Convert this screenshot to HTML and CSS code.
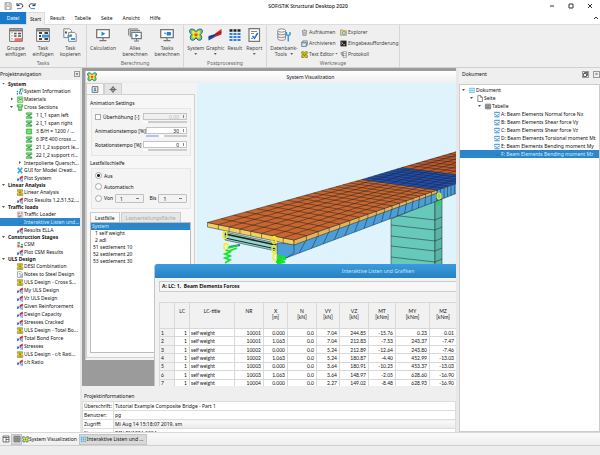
FILE: index.html
```
<!DOCTYPE html>
<html lang="de">
<head>
  <meta charset="UTF-8">
  <meta name="viewport" content="width=device-width, initial-scale=1.0">
  <title>SOFiSTiK Structural Desktop 2020</title>
  <link rel="stylesheet" href="styles.css">
</head>
<body>
  <!-- icon sprite -->
  <svg class="sprite" aria-hidden="true">
    <symbol id="i-save" viewBox="0 0 8 8"><path d="M1 .8h5.6l.6.6v6H1z" fill="#ddd" stroke="#888" stroke-width=".7"/><path d="M2.5 1h3v2h-3zM2.2 4.6h3.8v2.8H2.2z" fill="#fff" stroke="#888" stroke-width=".5"/></symbol>
    <symbol id="i-undo" viewBox="0 0 8 8"><path d="M1 1v2.6h2.6M1.2 3.4C2.4 1.3 6.6 1 6.8 3.8c0 1-.6 1.7-1.4 2.2" fill="none" stroke="#333" stroke-width="1"/><path d="M1 6.6h4" stroke="#2b8de0" stroke-width="1"/></symbol>
    <symbol id="i-group" viewBox="0 0 14 14"><path d="M.6.6h12.8v12.8H.6z" fill="#f6f6f6" stroke="#777" stroke-width="1"/><path d="M.6 2.4h12.8" stroke="#777" stroke-width="2"/><path d="M3 4v9" stroke="#999" stroke-dasharray="1.5 1.5"/><path d="M5 5.5h2.6M9 5.5h3M5 8h2.6M9 8h3" stroke="#555" stroke-width="1.6"/><path d="M5.5 10.2h7.5v3H5.5z" fill="#f07070"/></symbol>
    <symbol id="i-task" viewBox="0 0 14 14"><path d="M.6.6h12.8v12.8H.6z" fill="#f6f6f6" stroke="#777" stroke-width="1"/><path d="M.6 2.4h12.8" stroke="#777" stroke-width="2"/><path d="M3 5h3M3 8h2M3 11h3M8.5 11h3.5M8.5 5h3.5" stroke="#444" stroke-width="1.8"/><path d="M6 6.6h7v3H6z" fill="#3d9be0"/></symbol>
    <symbol id="i-copy" viewBox="0 0 14 14"><path d="M.8.8h6l1.6 1.6v7.2H.8z" fill="#fafafa" stroke="#888"/><path d="M5.6 4.4h6l1.6 1.6v7.4H5.6z" fill="#fafafa" stroke="#888"/><path d="M2 3.5h2v2H2zM6.8 6.6h2v2h-2z" fill="#555"/><path d="M4.5 7h4v2h-4zM8 10h4v2H8z" fill="#3d9be0"/></symbol>
    <symbol id="i-calc" viewBox="0 0 14 14"><path d="M.7 1.7h12.6v8H.7z" fill="#fff" stroke="#777" stroke-width="1.3"/><path d="M7 10v2.5M3.5 12.7h7" stroke="#777" stroke-width="1.2"/><path d="M5.5 3.5l3.8 2.3-3.8 2.3z" fill="#1e86dc"/></symbol>
    <symbol id="i-all" viewBox="0 0 14 14"><path d="M.7 7.5V1h9.5M2.3 9V2.6H12" fill="none" stroke="#777"/><path d="M3.8 4.4h9.5v6.3H3.8z" fill="#fff" stroke="#777" stroke-width="1.2"/><path d="M8.5 11v1.8M6 13h5" stroke="#777"/><path d="M7.3 5.6l3.3 1.9-3.3 2z" fill="#1e86dc"/></symbol>
    <symbol id="i-tcalc" viewBox="0 0 14 14"><path d="M.7 1.7h12.6v8H.7z" fill="#fff" stroke="#777" stroke-width="1.3"/><path d="M7 10v2.5M3.5 12.7h7" stroke="#777" stroke-width="1.2"/><path d="M4 5.2h2M7 4.5h3.5V7H7z" fill="#1e86dc" stroke="#1e86dc"/></symbol>
    <symbol id="i-fly" viewBox="0 0 14 14"><path d="M7 3.5C5 .6 1.5.5.8 2c-.6 1.5.2 3.5 1.7 4.6C1 8 .8 11 2.3 12c1.6.9 3.6-.2 4.7-2.2 1.1 2 3.1 3.1 4.7 2.2 1.5-1 1.3-4-.2-5.4 1.5-1.1 2.3-3.1 1.7-4.6C12.500.5 9 .6 7 3.5z" fill="#6fd05a" stroke="#284a9e" stroke-width=".9"/><path d="M7 5C5.5 3 3.3 2.7 2.8 3.5c-.3 1.3.6 2.2 1.7 3C3.2 7.8 3 9.5 3.8 10.2 5 10.6 6.2 9.4 7 8c.8 1.4 2 2.6 3.2 2.2.8-.7.6-2.4-.7-3.7 1.1-.8 2-1.7 1.7-3C10.7 2.7 8.5 3 7 5z" fill="#ffe32e"/><path d="M5.5 5.5h3v2.6h-3z" fill="#e2502a"/></symbol>
    <symbol id="i-graphic" viewBox="0 0 14 14"><path d="M.5 12.5V8L7 6v3z" fill="#2348a8"/><path d="M7 9V5.5L13.5 1v5.5z" fill="#d8232a"/><path d="M.5 9.8L13.5 4" stroke="#333" stroke-width=".8"/></symbol>
    <symbol id="i-result" viewBox="0 0 14 14"><path d="M1.5 2.5h11" stroke="#222" stroke-width="2.4" stroke-dasharray="3 1"/><path d="M1.5 6h11M1.5 9h11M1.5 12h11" stroke="#2f7fe0" stroke-width="1.9" stroke-dasharray="3 1"/></symbol>
    <symbol id="i-report" viewBox="0 0 14 14"><path d="M2 .7h10.5v12.6H2z" fill="#fff" stroke="#777" stroke-width="1.2"/><path d="M4 3.5h6M4 5.5h3M4 10.5h2" stroke="#888"/><path d="M5.5 8l2 2.3L10.7 5" fill="none" stroke="#1e70d0" stroke-width="1.5"/></symbol>
    <symbol id="i-db" viewBox="0 0 14 14"><path d="M.8 2.5v8.3c0 2 7.7 2 7.7 0V2.5" fill="#f4f4f4" stroke="#888"/><ellipse cx="4.650" cy="2.5" rx="3.850" ry="1.6" fill="#fff" stroke="#888"/><path d="M.8 5.3c0 2 7.7 2 7.7 0M.8 8c0 2 7.7 2 7.7 0" fill="none" stroke="#888"/><path d="M9.5 4v2.5c0 1 3.5 1 3.5 0V4M11.3 7v6.5" fill="none" stroke="#3d9be0" stroke-width="1.5"/></symbol>
    <symbol id="i-trash" viewBox="0 0 8 8"><path d="M1 2h6M3 1h2M1.8 2.3l.4 5h3.6l.4-5M3.3 3.3v3M4.7 3.3v3" fill="none" stroke="#777" stroke-width=".8"/></symbol>
    <symbol id="i-archive" viewBox="0 0 8 8"><path d="M2 1h5.3v5H2z" fill="#fff" stroke="#666" stroke-width=".8"/><path d="M.8 2.5h5.3v4.8H.8z" fill="#d8ecfb" stroke="#555" stroke-width=".8"/><path d="M1 3.4h5" stroke="#3d9be0"/></symbol>
    <symbol id="i-teddy" viewBox="0 0 8 8"><path d="M.8.8h2l1.2.8L5.2.8h2v2l-.8 1.4.9 1v2.2H5L4 6.7l-1 .7H.8V5.2l.8-1-.8-1.4z" fill="#d8c514" stroke="#55500a" stroke-width=".6"/><path d="M2.5 3h1v1h-1zM4.6 3h1v1h-1zM3 5h2v.8H3z" fill="#333"/></symbol>
    <symbol id="i-folder" viewBox="0 0 8 8"><path d="M.6 1h2.7l.6.9h3.4v5.3H.6z" fill="#f0d070" stroke="#8a7a40" stroke-width=".6"/><circle cx="4.5" cy="4.6" r="1.8" fill="#bfe3fa" stroke="#3d86c0" stroke-width=".7"/></symbol>
    <symbol id="i-cmd" viewBox="0 0 8 8"><path d="M.5.7h7v6.6h-7z" fill="#222"/><path d="M1.5 2.3l1.6 1.3-1.6 1.3M3.8 5.5h2" fill="none" stroke="#fff" stroke-width=".8"/></symbol>
    <symbol id="i-log" viewBox="0 0 8 8"><path d="M3.5.8h3.8v6.4H3.5z" fill="#fff" stroke="#777" stroke-width=".7"/><path d="M.6 2h3.3M1 3.5h3M2 5h2.5M5 3h1.5M5 5h1.5" stroke="#555" stroke-width=".8"/></symbol>
    <symbol id="t-info" viewBox="0 0 8 8"><path d="M4.5 1h2.7v3.5" fill="none" stroke="#5fc05a" stroke-width="1.2"/><path d="M1 3v1.5M1 5.5v2M3.5 1.5C5 1 5 3 3.7 4.5V7.2" fill="none" stroke="#1e78d0" stroke-width="1.3"/><path d="M5.6 5.5v2" stroke="#1e78d0" stroke-width="1.2"/></symbol>
    <symbol id="t-mat" viewBox="0 0 8 8"><path d="M1 1h6.3v6.3H1z" fill="#b7e8ad" stroke="#4cb84a" stroke-width=".8"/><path d="M2 5.5l2-2 1 1 1.5-2M2 2.5h2" fill="none" stroke="#27862c" stroke-width=".8"/></symbol>
    <symbol id="t-cross" viewBox="0 0 8 8"><path d="M.8.8h6.4v2.4H6v4.2H2.2V3.2H.8z" fill="#62ca5a" stroke="#2f9436" stroke-width=".6"/><path d="M2.8 2h3M3.3 5h1.6" stroke="#e8ffe5" stroke-width=".8"/></symbol>
    <symbol id="t-sec" viewBox="0 0 8 8"><path d="M.8.8h6.5v2H5.2v2.7h2.1v1.8H.8V5.5h2V2.8h-2z" fill="#7fd873" stroke="#36a53c" stroke-width=".6"/><path d="M1.8 5.5l2-2.2 1 .8 1.6-2M5 6.3h2" fill="none" stroke="#1e7090" stroke-width=".8"/></symbol>
    <symbol id="t-rect" viewBox="0 0 8 8"><path d="M1 1.2h6v5.6H1z" fill="#67d35c" stroke="#36a53c" stroke-width=".8"/><path d="M2 3h4M2 4.8h4" stroke="#b6f0ae" stroke-width=".6"/></symbol>
    <symbol id="t-gui" viewBox="0 0 8 8"><path d="M1.5.8L6.5 7.2M6.5.8L1.5 7.2" stroke="#27a5e4" stroke-width="1.7"/></symbol>
    <symbol id="t-plot" viewBox="0 0 8 8"><path d="M.8 7.2V3.9L3.2 4v1.6z" fill="#245fc4"/><path d="M3.6 4.6V2.7L7.2.7v3z" fill="#d3242e"/><path d="M4 5.2h1.2v2.2M6 4.7h1.3M6 6h1.3M6 7.2h1.3" fill="none" stroke="#2b6fc4" stroke-width=".9"/></symbol>
    <symbol id="t-bear" viewBox="0 0 8 8"><path d="M1 .8h6v1.8l-1 1 1.2 1.2v2.5H1V5l1-1.4-1-1z" fill="#e8d62c" stroke="#6a6518" stroke-width=".6"/><path d="M2.5 2.4h3M3 4h2M2.5 5.9h3.5" stroke="#333" stroke-width=".6"/></symbol>
    <symbol id="t-load" viewBox="0 0 8 8"><path d="M1 1h6.2v6.2H1z" fill="#f1f1f1" stroke="#999" stroke-width=".6"/><path d="M1.7 2.5h2M5 2.5h1.5" stroke="#d3303a"/><path d="M2 4.8h1.5M5 4.2v2.5M2 6.5h2" stroke="#444" stroke-width=".9"/></symbol>
    <symbol id="t-list" viewBox="0 0 8 8"><path d="M2 6.5l2-2 1 1 2-2.5" fill="none" stroke="#1f6fb0" stroke-width=".8"/></symbol>
    <symbol id="t-csm" viewBox="0 0 8 8"><path d="M1 1h3v2H1zM5 3h2.3v2H5z" fill="#4cb84a"/><path d="M1 4h2.5v3.3H1z" fill="#e05050"/><path d="M4.5 6h2.8v1.5H4.5z" fill="#333"/></symbol>
    <symbol id="t-note" viewBox="0 0 8 8"><path d="M1.2.8h3.8l1.8 1.7v4.8H1.2z" fill="#fff" stroke="#777" stroke-width=".7"/><path d="M2.5 3h2M3.5 4.5h3M3.5 6h3" stroke="#4a88b8" stroke-width=".8"/></symbol>
    <symbol id="d-page" viewBox="0 0 8 8"><path d="M1.5.7h3.3l2 2v4.7H1.5z" fill="#fff" stroke="#444" stroke-width=".7"/><path d="M4.7.7v2.1h2" fill="none" stroke="#444" stroke-width=".6"/></symbol>
    <symbol id="d-doc" viewBox="0 0 8 8"><path d="M1.7.8v6.4M4 .8v6.4M6.3.8v6.4" stroke="#58b4ec" stroke-width="1.6" stroke-dasharray="1.7 .5"/></symbol>
    <symbol id="d-tab" viewBox="0 0 8 8"><path d="M1 1.3h6v5.5H1zM1 3.2h6M1 5h6M3 1.3v5.5M5 1.3v5.5" fill="#ddd" stroke="#555" stroke-width=".7"/></symbol>
    <symbol id="d-bend" viewBox="0 0 8 8"><path d="M1 1h6v6H1z" fill="#f2f8fd" stroke="#aac4da" stroke-width=".6"/><path d="M1 1.7h6M1 3.2l2 1.6h2l2-1.6M1.5 6.5h5" fill="none" stroke="#2e86d4" stroke-width=".9"/></symbol>
    <symbol id="i-win" viewBox="0 0 8 8"><path d="M1 1h6v6H1zM1 2.5h6M4 2.5v4.5M4 4.5h3" fill="#fff" stroke="#555" stroke-width=".8"/></symbol>
  </svg>

  <header class="titlebar">
    <div class="quick">
      <button aria-label="Speichern"><svg><use href="#i-save"/></svg></button>
      <button aria-label="Rückgängig"><svg><use href="#i-undo"/></svg></button>
      <button aria-label="Wiederholen" class="redo"><svg><use href="#i-undo"/></svg></button>
    </div>
    <h1>SOFiSTiK Structural Desktop 2020</h1>
    <div class="winbtns">
      <button aria-label="Minimieren"><svg viewBox="0 0 6 6"><path d="M1 3h4"/></svg></button>
      <button aria-label="Maximieren"><svg viewBox="0 0 6 6"><path d="M1 1h4v4H1z"/></svg></button>
      <button aria-label="Schließen"><svg viewBox="0 0 6 6"><path d="M1 1l4 4M5 1L1 5"/></svg></button>
    </div>
  </header>

  <nav class="tabs">
    <button class="datei">Datei</button>
    <button class="active">Start</button>
    <button>Result</button>
    <button>Tabelle</button>
    <button>Seite</button>
    <button>Ansicht</button>
    <button>Hilfe</button>
    <button class="collapse" aria-label="Menüband einklappen"><svg viewBox="0 0 6 6"><path d="M1 4l2-2 2 2"/></svg></button>
  </nav>

  <section class="ribbon">
    <div class="group g-tasks">
      <div class="tools">
        <button><svg><use href="#i-group"/></svg>Gruppe<br>einfügen</button>
        <button><svg><use href="#i-task"/></svg>Task<br>einfügen</button>
        <button><svg><use href="#i-copy"/></svg>Task<br>kopieren</button>
      </div>
      <div class="caption">Tasks</div>
    </div>
    <div class="group g-calc">
      <div class="tools">
        <button><svg><use href="#i-calc"/></svg>Calculation</button>
        <button><svg><use href="#i-all"/></svg>Alles<br>berechnen</button>
        <button><svg><use href="#i-tcalc"/></svg>Tasks<br>berechnen</button>
      </div>
      <div class="caption">Berechnung</div>
    </div>
    <div class="group g-post">
      <div class="tools">
        <button><svg><use href="#i-fly"/></svg>System<i class="arrow"></i></button>
        <button><svg><use href="#i-graphic"/></svg>Graphic<i class="arrow"></i></button>
        <button><svg><use href="#i-result"/></svg>Result</button>
        <button><svg><use href="#i-report"/></svg>Report<i class="arrow"></i></button>
      </div>
      <div class="caption">Postprocessing</div>
    </div>
    <div class="group g-tools">
      <div class="tools">
        <button class="db"><svg><use href="#i-db"/></svg>Datenbank-<br>Tools <i class="arrow inline"></i></button>
        <div class="list">
          <button><svg><use href="#i-trash"/></svg>Aufräumen</button>
          <button><svg><use href="#i-archive"/></svg>Archivieren</button>
          <button><svg><use href="#i-teddy"/></svg>Text Editor <i class="arrow inline"></i></button>
        </div>
        <div class="list">
          <button><svg><use href="#i-folder"/></svg>Explorer</button>
          <button><svg><use href="#i-cmd"/></svg>Eingabeaufforderung</button>
          <button><svg><use href="#i-log"/></svg>Protokoll</button>
        </div>
      </div>
      <div class="caption">Werkzeuge</div>
    </div>
  </section>

  <main>
    <aside class="navi">
      <div class="dockhead">Projektnavigation <button aria-label="Projektnavigation schließen">×</button></div>
      <ul class="tree">
        <li class="head open">System</li>
        <li><svg><use href="#t-info"/></svg>System Information</li>
        <li class="closed"><svg><use href="#t-mat"/></svg>Materials</li>
        <li class="open"><svg><use href="#t-cross"/></svg>Cross Sections</li>
        <li class="sub"><svg><use href="#t-sec"/></svg>1 I_1 span left</li>
        <li class="sub"><svg><use href="#t-sec"/></svg>2 I_1 span right</li>
        <li class="sub"><svg><use href="#t-rect"/></svg>3 B/H = 1200 / ...</li>
        <li class="sub"><svg><use href="#t-sec"/></svg>6 IPE 400 cross ...</li>
        <li class="sub"><svg><use href="#t-sec"/></svg>21 I_2 support le...</li>
        <li class="sub"><svg><use href="#t-sec"/></svg>22 I_2 support ri...</li>
        <li class="inter closed">Interpolierte Quersch...</li>
        <li><svg><use href="#t-gui"/></svg>GUI for Model Creati...</li>
        <li><svg><use href="#t-plot"/></svg>Plot System</li>
        <li class="head open">Linear Analysis</li>
        <li><svg><use href="#t-bear"/></svg>Linear Analysis</li>
        <li><svg><use href="#t-plot"/></svg>Plot Results 1,2,51,52,...</li>
        <li class="head open">Traffic loads</li>
        <li><svg><use href="#t-load"/></svg>Traffic Loader</li>
        <li class="selected"><svg><use href="#t-list"/></svg>Interaktive Listen und...</li>
        <li><svg><use href="#t-plot"/></svg>Results ELLA</li>
        <li class="head open">Construction Stages</li>
        <li><svg><use href="#t-csm"/></svg>CSM</li>
        <li><svg><use href="#t-plot"/></svg>Plot CSM Results</li>
        <li class="head open">ULS Design</li>
        <li><svg><use href="#t-bear"/></svg>DESI Combination</li>
        <li><svg><use href="#t-note"/></svg>Notes to Steel Design</li>
        <li><svg><use href="#t-bear"/></svg>ULS Design - Cross S...</li>
        <li><svg><use href="#t-plot"/></svg>My ULS Design</li>
        <li><svg><use href="#t-plot"/></svg>Vz ULS Design</li>
        <li><svg><use href="#t-plot"/></svg>Given Reinforcement</li>
        <li><svg><use href="#t-plot"/></svg>Design Capacity</li>
        <li><svg><use href="#t-plot"/></svg>Stresses Cracked</li>
        <li><svg><use href="#t-bear"/></svg>ULS Design - Total Bo...</li>
        <li><svg><use href="#t-plot"/></svg>Total Bond Force</li>
        <li><svg><use href="#t-plot"/></svg>Stresses</li>
        <li><svg><use href="#t-bear"/></svg>ULS Design - c/t Rati...</li>
        <li><svg><use href="#t-plot"/></svg>c/t Ratio</li>
      </ul>
    </aside>

    <div class="center">
      <div class="mdi">
        <section class="viswin">
          <div class="vistitle"><svg><use href="#i-fly"/></svg><span>System Visualization</span></div>
          <div class="visbody">
            <form class="controls">
              <div class="ctabs">
                <button type="button" class="on" aria-label="Animation"><svg viewBox="0 0 8 8"><path d="M.7.7h6.6v6.6H.7z" fill="#dceefa" stroke="#555" stroke-width=".9"/><path d="M2.5 5.8C2.5 3 5.5 3 5.5 5.8z" fill="#3d86c0"/><circle cx="4" cy="2.7" r="1" fill="#3d86c0"/></svg></button>
                <button type="button" aria-label="Ansicht"><svg viewBox="0 0 8 8"><circle cx="4" cy="4" r="2.3" fill="none" stroke="#555" stroke-width=".9"/><path d="M4 0v8M0 4h8" stroke="#555" stroke-width=".9"/></svg></button>
              </div>
              <div class="cpage">
                <fieldset>
                  <legend>Animation Settings</legend>
                  <div class="box">
                    <div class="row">
                      <label><input type="checkbox"> Überhöhung [-]</label>
                      <div class="spin off"><input type="text" value="0.00" aria-label="Überhöhung" disabled><div class="slide"><b></b></div></div>
                    </div>
                    <div class="row">
                      <label for="tempo">Animationstempo [%]</label>
                      <div class="spin"><input type="text" id="tempo" value="30"><div class="slide mid"><b></b></div></div>
                    </div>
                    <div class="row">
                      <label for="rot">Rotationstempo [%]</label>
                      <div class="spin"><input type="text" id="rot" value="0"><div class="slide"><b></b></div></div>
                    </div>
                  </div>
                </fieldset>
                <fieldset>
                  <legend>Lastfallschleife</legend>
                  <div class="box loop">
                    <label><input type="radio" name="loop" checked> Aus</label>
                    <label><input type="radio" name="loop"> Automatisch</label>
                    <div class="range">
                      <label><input type="radio" name="loop"> Von</label>
                      <select aria-label="Von"><option>1</option></select>
                      <label class="bis" for="bis">Bis</label>
                      <select id="bis"><option>1</option></select>
                    </div>
                  </div>
                </fieldset>
                <div class="ltabs">
                  <button type="button" class="on">Lastfälle</button>
                  <button type="button" disabled>Lastverteilungsfläche</button>
                </div>
                <ul class="cases">
                  <li class="selected">System</li>
                  <li class="one">1 self weight</li>
                  <li class="one">2 adl</li>
                  <li>51 settlement 10</li>
                  <li>52 settlement 20</li>
                  <li>53 settlement 30</li>
                </ul>
              </div>
            </form>
            <svg class="view" id="view" viewBox="197 83 259 277" preserveAspectRatio="xMinYMin slice" role="img" aria-label="Brückenmodell"></svg>
          </div>
        </section>

        <section class="tablewin">
          <div class="tabletitle"><span>Interaktive Listen und Grafiken</span></div>
          <div class="tablehead">A: LC: 1,&nbsp; Beam Elements Forces</div>
          <table>
            <colgroup><col class="w15"><col class="w15"><col class="w45"><col class="w29"><col class="w24"><col class="w29"><col class="w23"><col class="w29"><col class="w27"><col class="w34"><col></colgroup>
            <thead>
              <tr><th></th><th class="r">LC</th><th>LC-title</th><th>NR</th><th>X<br>[m]</th><th>N<br>[kN]</th><th>VY<br>[kN]</th><th>VZ<br>[kN]</th><th>MT<br>[kNm]</th><th>MY<br>[kNm]</th><th>MZ<br>[kNm]</th></tr>
            </thead>
            <tbody>
              <tr><th>1</th><td>1</td><td class="l">self weight</td><td>10001</td><td>0.000</td><td>0.0</td><td>7.04</td><td>244.85</td><td>-15.76</td><td>0.23</td><td>0.01</td></tr>
              <tr><th>2</th><td>1</td><td class="l">self weight</td><td>10001</td><td>1.063</td><td>0.0</td><td>7.04</td><td>212.83</td><td>-7.53</td><td>243.37</td><td>-7.47</td></tr>
              <tr><th>3</th><td>1</td><td class="l">self weight</td><td>10002</td><td>0.000</td><td>0.0</td><td>5.24</td><td>212.89</td><td>-12.64</td><td>243.80</td><td>-7.46</td></tr>
              <tr><th>4</th><td>1</td><td class="l">self weight</td><td>10002</td><td>1.063</td><td>0.0</td><td>5.24</td><td>180.87</td><td>-4.40</td><td>452.99</td><td>-13.03</td></tr>
              <tr><th>5</th><td>1</td><td class="l">self weight</td><td>10003</td><td>0.000</td><td>0.0</td><td>3.64</td><td>180.91</td><td>-10.25</td><td>453.37</td><td>-13.03</td></tr>
              <tr><th>6</th><td>1</td><td class="l">self weight</td><td>10003</td><td>1.063</td><td>0.0</td><td>3.64</td><td>148.97</td><td>-2.05</td><td>628.60</td><td>-16.90</td></tr>
              <tr><th>7</th><td>1</td><td class="l">self weight</td><td>10004</td><td>0.000</td><td>0.0</td><td>2.27</td><td>149.02</td><td>-8.48</td><td>628.93</td><td>-16.90</td></tr>
            </tbody>
          </table>
        </section>
      </div>

      <section class="info">
        <h2>Projektinformationen</h2>
        <table>
          <tr><th>Überschrift:</th><td>Tutorial Example Composite Bridge - Part 1</td></tr>
          <tr><th>Benutzer:</th><td>pg</td></tr>
          <tr><th>Zugriff:</th><td class="combo">Mi Aug 14 15:18:07 2019, sm</td></tr>
          <tr><th>Norm:</th><td>DIN EN1994-2004</td></tr>
        </table>
      </section>
    </div>

    <aside class="dokument">
      <div class="dockhead">Dokument <span><button aria-label="Lösen"><svg viewBox="0 0 5 5"><path d="M.5 1.5h3v3h-3zM1.5 1.5v-1h3v3h-1" fill="none" stroke="#444" stroke-width=".8"/></svg></button><button aria-label="Dokument schließen">×</button></span></div>
      <ul class="tree">
        <li class="open d0"><svg><use href="#d-doc"/></svg>Dokument</li>
        <li class="open d1"><svg><use href="#d-page"/></svg>Seite</li>
        <li class="open d2"><svg><use href="#d-tab"/></svg>Tabelle</li>
        <li class="d3"><svg><use href="#d-bend"/></svg>A: Beam Elements Normal force Nx</li>
        <li class="d3"><svg><use href="#d-bend"/></svg>B: Beam Elements Shear force Vy</li>
        <li class="d3"><svg><use href="#d-bend"/></svg>C: Beam Elements Shear force Vz</li>
        <li class="d3"><svg><use href="#d-bend"/></svg>D: Beam Elements Torsional moment Mt</li>
        <li class="d3"><svg><use href="#d-bend"/></svg>E: Beam Elements Bending moment My</li>
        <li class="d3 selected"><svg><use href="#t-list"/></svg>F: Beam Elements Bending moment Mz</li>
      </ul>
    </aside>
  </main>

  <footer class="taskbar">
    <button class="ico" aria-label="Fenster"><svg><use href="#i-win"/></svg></button>
    <button class="ico on" aria-label="Kacheln"><svg><use href="#d-tab"/></svg></button>
    <button class="task"><svg><use href="#i-fly"/></svg>System Visualization</button>
    <button class="task on"><svg><use href="#d-doc"/></svg>Interaktive Listen und ...</button>
  </footer>

  <script src="bridge.js"></script>
</body>
</html>
```
FILE: styles.css
```
:root {
  --blau: #2b87cb;
  --grau: #efefef;
  --text: #111;
}

* {
  box-sizing: border-box;
}

body {
  margin: 0;
  height: 100vh;
  display: flex;
  flex-direction: column;
  overflow: hidden;
  background: #ededed;
  color: var(--text);
  font: 5px/8px "Noto Sans", "Open Sans", sans-serif;
}

button, input, select {
  font: inherit;
  color: inherit;
  margin: 0;
  padding: 0;
  border: 0;
  background: none;
}

ul {
  list-style: none;
  margin: 0;
  padding: 0;
}

svg {
  display: block;
  width: 8px;
  height: 8px;
  flex: none;
}

.sprite {
  position: absolute;
  width: 0;
  height: 0;
}

/* title bar */
.titlebar {
  display: grid;
  grid-template-columns: 1fr auto 1fr;
  align-items: center;
  height: 12px;
  flex: none;
  background: #fff;
}

.titlebar h1 {
  margin: 0;
  padding-left: 16px;
  font-size: 5px;
  font-weight: 500;
}

.quick {
  display: flex;
  gap: 4px;
  padding-left: 4px;
}

.redo svg {
  transform: scaleX(-1);
}

.winbtns {
  display: flex;
  justify-content: flex-end;
  gap: 13px;
  padding-right: 7px;
}

.winbtns svg,
.collapse svg {
  width: 6px;
  height: 6px;
  fill: none;
  stroke: #333;
  stroke-width: 1;
}

/* ribbon tabs */
.tabs {
  display: flex;
  height: 13px;
  flex: none;
  background: #fff;
  border-bottom: 1px solid #dcdcdc;
}

.tabs button {
  padding: 0 5px;
}

.tabs .datei {
  width: 26px;
  padding: 0;
  background: #1979ca;
  color: #fff;
}

.tabs .active {
  width: 19px;
  margin-bottom: -1px;
  padding: 0;
  background: var(--grau);
  border: 1px solid #dcdcdc;
  border-bottom: 0;
}

.tabs .collapse {
  margin-left: auto;
  padding: 0 1px;
}

/* ribbon */
.ribbon {
  display: flex;
  height: 43px;
  flex: none;
  background: var(--grau);
  border-bottom: 1px solid #d0d0d0;
  color: #444;
}

.group {
  display: flex;
  flex-direction: column;
  border-right: 1px solid #d6d6d6;
}

.tools {
  display: flex;
  flex: 1;
}

.tools > button {
  flex: 1;
  display: block;
  padding-top: 3px;
  line-height: 6px;
  align-self: flex-start;
  text-align: center;
}

.tools > button svg {
  width: 14px;
  height: 14px;
  margin: 0 auto 3px;
}

.caption {
  height: 8px;
  text-align: center;
  color: #666;
}

.g-tasks { width: 87px; padding: 0 2px; }
.g-calc { width: 97px; }
.g-post { width: 83px; padding: 0 2px; }
.g-tools { width: 133px; }

.tools > .db {
  flex: none;
  width: 34px;
}

.arrow {
  display: block;
  width: 3px;
  height: 2px;
  margin: 2px auto 0;
  background: #666;
  clip-path: polygon(0 0, 100% 0, 50% 100%);
}

.arrow.inline {
  display: inline-block;
  margin: 0 0 1px 2px;
}

.list .arrow.inline {
  margin-left: 0;
}

.list {
  display: flex;
  flex-direction: column;
  gap: 3px;
  padding-top: 3px;
  width: 39px;
}

.list button {
  display: flex;
  align-items: center;
  gap: 1px;
  height: 8px;
  white-space: nowrap;
}

.list svg {
  width: 7px;
  height: 7px;
}

/* main area */
main {
  flex: 1;
  min-height: 0;
  display: flex;
}

.navi {
  width: 82px;
  flex: none;
  display: flex;
  flex-direction: column;
  padding-right: 2px;
  background: #e8e8e8;
}

.dockhead {
  display: flex;
  justify-content: space-between;
  align-items: center;
  height: 12px;
  flex: none;
  background: var(--grau);
}

.dockhead button {
  width: 6px;
  height: 6px;
  border: 1px solid #999;
  line-height: 4px;
}

.tree {
  flex: 1;
  min-height: 0;
  overflow: hidden;
  background: #fff;
}

.tree li {
  display: flex;
  align-items: center;
  height: 8px;
  padding-left: 16px;
  white-space: nowrap;
}

.tree svg {
  height: 7px;
}

.tree .head {
  height: 6px;
  padding-left: 2px;
  font-weight: bold;
}

.tree .head:first-child { height: 7px; }

.tree .sub { padding-left: 25px; gap: 3px; }
.tree .inter { height: 7px; }

.tree .selected {
  background: var(--blau);
  color: #d5ebfb;
}

.open::before,
.closed::before {
  content: "";
  width: 3px;
  height: 2px;
  margin-right: 3px;
  background: #555;
  clip-path: polygon(0 0, 100% 0, 50% 100%);
}

.closed::before {
  width: 2px;
  height: 3px;
  clip-path: polygon(0 0, 100% 50%, 0 100%);
}

.navi .open:not(.head) { padding-left: 10px; }
.navi .closed { padding-left: 11px; }
.navi .inter.closed { padding-left: 19px; }

.center {
  flex: 1;
  min-width: 0;
  display: flex;
  flex-direction: column;
}

.mdi {
  position: relative;
  flex: 1;
  min-height: 0;
  overflow: hidden;
  padding: 3px 0 26px 3px;
  background: #9b9b9b;
}

/* system visualization window */
.viswin {
  height: 100%;
  display: flex;
  flex-direction: column;
  background: #f3f3f3;
  border-left: 1px solid #ccc;
}

.vistitle {
  display: flex;
  align-items: center;
  height: 12px;
  flex: none;
  padding-left: 1px;
  background: linear-gradient(#fff, #eee);
}

.vistitle svg {
  width: 10px;
  height: 10px;
}

.vistitle span {
  flex: 1;
  text-align: center;
  padding-left: 68px;
}

.visbody {
  flex: 1;
  min-height: 0;
  display: flex;
}

.controls {
  width: 111px;
  flex: none;
  display: flex;
  flex-direction: column;
}

.ctabs {
  display: flex;
  margin-bottom: -1px;
}

.ctabs button {
  width: 18px;
  height: 12px;
  border: 1px solid #d0d0d0;
  background: #e4e4e4;
}

.ctabs svg {
  height: 7px;
  margin: auto;
}

.ctabs .on {
  background: #f7f7f7;
  border-bottom-color: #f7f7f7;
}

.cpage {
  flex: 1;
  min-height: 0;
  display: flex;
  flex-direction: column;
  margin: 0 2px 2px 0;
  padding: 4px 3px;
  background: #f7f7f7;
  border: 1px solid #d0d0d0;
}

fieldset {
  margin: 0;
  padding: 0;
  border: 0;
  min-width: 0;
}

legend {
  padding: 0;
}

.box {
  margin: 1px 0 3px 1px;
  padding: 4px 3px 0;
  background: #f4f4f4;
  border: 1px solid #e6e6e6;
}

.row {
  display: flex;
  align-items: flex-start;
  justify-content: space-between;
  height: 14px;
}

.row label {
  white-space: nowrap;
}

label {
  display: flex;
  align-items: center;
  gap: 2px;
}

input[type=checkbox] {
  appearance: none;
  width: 6px;
  height: 6px;
  border: 1px solid #aaa;
  background: #fff;
}

input[type=radio] {
  appearance: none;
  width: 7px;
  height: 7px;
  border: 1px solid #aaa;
  border-radius: 50%;
  background: #fff;
}

input[type=radio]:checked {
  background: radial-gradient(#222 0 1px, #fff 2px);
}

.spin {
  width: 44px;
}

.spin input {
  display: block;
  width: 100%;
  height: 7px;
  padding-right: 7px;
  text-align: right;
  background: linear-gradient(#888, #888) right 2px center / 1px 3px no-repeat #fff;
  border: 1px solid #c4c4c4;
  line-height: 5px;
}

.spin.off input {
  background-color: #f0f0f0;
  color: #bbb;
}

.slide {
  height: 2px;
  margin-top: 1px;
  background: #ccc;
}

.slide b {
  display: block;
  width: 5px;
  height: 2px;
  background: #fff;
}

.slide.mid {
  background: linear-gradient(to right, #b9bff0 30%, #ccc 30%);
}

.slide.mid b {
  margin-left: 13px;
}

.loop {
  padding: 1px 3px 4px;
}

.loop > label {
  height: 11px;
}

.range {
  display: flex;
  align-items: center;
  height: 12px;
}

.range .bis {
  margin: 0 2px 0 6px;
}

select {
  appearance: none;
  width: 29px;
  height: 9px;
  padding-left: 4px;
  border: 1px solid #c0c0c0;
  border-radius: 1px;
  background: linear-gradient(#777, #777) right 4px center / 3px 1px no-repeat #f2f2f2;
}

.range select:first-of-type {
  margin-left: 2px;
}

.ltabs {
  display: flex;
  gap: 1px;
}

.ltabs button {
  height: 10px;
  padding: 0 4px;
  border: 1px solid #ccc;
  border-bottom: 0;
  background: #e6e6e6;
  color: #aaa;
}

.ltabs .on {
  background: #fafafa;
  color: #222;
}

.cases {
  flex: 1;
  min-height: 0;
  background: #fff;
  border: 1px solid #bbb;
  line-height: 7px;
}

.cases li {
  height: 7px;
  padding-left: 2px;
}

.cases .one {
  padding-left: 4px;
}

.cases .selected {
  padding-left: 1px;
  background: var(--blau);
  color: #cfe8fa;
}

.view {
  flex: 1;
  min-width: 0;
  width: auto;
  height: 100%;
  background: #dff3fd;
}

/* floating list window */
.tablewin {
  position: absolute;
  left: 72px;
  right: 0;
  top: 196px;
  bottom: 0;
  overflow: hidden;
  background: #f2f2f2;
  border-left: 1px solid #c4c4c4;
  border-radius: 3px 0 0 0;
}

.tabletitle {
  height: 14px;
  background: linear-gradient(#3b9bdc, #2582c4);
  color: #c8e2f5;
  line-height: 14px;
  text-align: center;
}

.tabletitle span {
  padding-left: 145px;
}

.tablehead {
  margin: 3px 0 10px 4px;
  height: 11px;
  padding-left: 2px;
  border: 1px solid #ccc;
  border-right: 0;
  background: #f7f7f7;
  font-weight: bold;
  line-height: 9px;
}

.tablewin table {
  table-layout: fixed;
  width: 298px;
  height: 86px;
  margin-left: 4px;
  border-collapse: collapse;
  background: #fff;
  font-family: Lato, "Noto Sans", sans-serif;
  line-height: 6px;
}

.tablewin td,
.tablewin th {
  padding: 0 2px 0 0;
  border: 1px solid #d8d8d8;
  text-align: right;
  font-weight: normal;
  white-space: nowrap;
}

.tablewin th {
  padding: 0 1px;
  text-align: left;
  background: #f1f1f1;
}

.tablewin thead th {
  height: 26px;
  padding-top: 5px;
  vertical-align: top;
  text-align: center;
}

.tablewin thead .r { text-align: right; padding-right: 4px; }
.tablewin .l { text-align: left; padding-left: 1px; }

.w15 { width: 15px; }
.w45 { width: 45px; }
.w29 { width: 29px; }
.w24 { width: 24px; }
.w23 { width: 23px; }
.w27 { width: 27px; }
.w34 { width: 34px; }

/* project information */
.info {
  height: 46px;
  flex: none;
  overflow: hidden;
  background: var(--grau);
}

.info h2 {
  margin: 0;
  padding: 6px 2px 0;
  height: 15px;
  font-size: 5px;
  font-weight: normal;
}

.info table {
  width: 100%;
  border-collapse: collapse;
  background: #fff;
}

.info th,
.info td {
  height: 9px;
  padding: 0 1px;
  border: 1px solid #ddd;
  text-align: left;
  font-weight: normal;
  line-height: 7px;
}

.info th {
  width: 31px;
}

.info .combo {
  background: linear-gradient(#fafafa, #eaeaea);
}

/* document dock */
.dokument {
  width: 144px;
  flex: none;
  display: flex;
  flex-direction: column;
  padding-left: 3px;
  background: #e8e8e8;
}

.dokument .dockhead {
  height: 16px;
  padding: 0 0 4px 3px;
}

.dokument .dockhead span {
  display: flex;
  gap: 4px;
}

.dokument .dockhead button {
  width: 7px;
  height: 7px;
  color: #444;
}

.dockhead svg {
  width: 5px;
  height: 5px;
}

.dokument .tree {
  padding-top: 1px;
  border: 1px solid #ccc;
}

.dokument .d0 { padding-left: 2px; }
.dokument .d1 { padding-left: 10px; }
.dokument .d2 { padding-left: 18px; }
.dokument .d3 { padding-left: 33px; }

/* task bar */
.taskbar {
  display: flex;
  align-items: center;
  height: 14px;
  flex: none;
  margin-bottom: 9px;
  background: linear-gradient(#fafafa, #eee);
  border-top: 1px solid #d8d8d8;
  border-bottom: 1px solid #d0d0d0;
}

.taskbar button {
  display: flex;
  align-items: center;
  height: 11px;
  white-space: nowrap;
}

.taskbar .ico {
  width: 11px;
  justify-content: center;
}

.taskbar .task {
  margin-right: 2px;
}

.taskbar .task svg {
  width: 7px;
  height: 7px;
}

.taskbar .task.on {
  padding-right: 3px;
}

.taskbar .on {
  background: #d9d9d9;
  border: 1px solid #c4c4c4;
}
```
FILE: bridge.js
```
const NS = 'http://www.w3.org/2000/svg';
const view = document.getElementById('view');

function draw(tag, attrs) {
  const el = document.createElementNS(NS, tag);
  for (const key in attrs) el.setAttribute(key, attrs[key]);
  view.appendChild(el);
}

function poly(points, fill) {
  draw('polygon', { points: points.join(' '), fill: fill, stroke: '#222', 'stroke-width': 0.5 });
}

function line(a, b, color, width) {
  draw('line', { x1: a[0], y1: a[1], x2: b[0], y2: b[1], stroke: color || '#222', 'stroke-width': width || 0.5 });
}

function mix(a, b, t) {
  return [a[0] + (b[0] - a[0]) * t, a[1] + (b[1] - a[1]) * t];
}

// distance along the deck, cells get shorter towards the back
function depth(i, n, k) {
  return (i * (1 + k * n)) / (n * (1 + k * i));
}

// a, b = near edge, c, d = far edge
function mesh(a, b, c, d, fill, n, m, k) {
  poly([a, b, c, d], fill);
  for (let i = 1; i < n; i++) {
    const t = depth(i, n, k);
    line(mix(a, d, t), mix(b, c, t));
  }
  for (let j = 1; j < m; j++) line(mix(a, b, j / m), mix(d, c, j / m));
}

// side strip with vertical joints
function strip(a, b, c, d, fill, n, k) {
  poly([a, b, c, d], fill);
  for (let i = 1; i < n; i++) {
    const t = depth(i, n, k);
    line(mix(a, b, t), mix(d, c, t));
  }
}

// pillar
poly([[391, 219], [435, 200], [435, 270], [391, 270]], '#66c9ba');
poly([[435, 200], [442, 199], [442, 270], [435, 270]], '#58b5a8');
[215, 225, 236, 246, 257].forEach(function (y) {
  line([391, y], [435, y + 5]);
  line([435, y + 5], [442, y + 2]);
});

// girders
strip([294, 244], [437, 192], [437, 201], [286, 258], '#4a9fda', 17, 0.031);
strip([437, 190], [470, 179], [470, 188], [437, 201], '#4a9fda', 10, 0.01);
poly([[277, 243], [294, 244], [294, 253], [286, 258], [277, 262]], '#4a9fda');
poly([[225, 232], [276, 243], [276, 251], [225, 240]], '#8fd8cd');
line([225, 234], [276, 245], '#222', 1.6);
line([225, 238], [276, 249], '#222', 1);
line([229, 247], [240, 245], '#2f6fa8', 2);

// deck
strip([207.5, 222.5], [294, 240], [294, 245], [207.5, 227], '#f0d060', 8, 0);
strip([294, 240], [437, 190], [437, 193], [294, 245], '#e5b45a', 17, 0.031);
mesh([207.5, 222.5], [294, 240], [437, 190], [362, 179.5], '#c9662f', 17, 8, 0.031);
mesh([362, 179.5], [437, 190], [475, 177], [402, 167.5], '#1f4fb4', 7, 8, 0.01);
mesh([402, 167.5], [475, 177], [560, 147], [490, 142], '#c05a2b', 14, 8, 0.01);

// bearings
[[225, 235], [226, 247], [274, 240], [274, 249], [275, 257]].forEach(function (p) {
  draw('ellipse', { cx: p[0], cy: p[1], rx: 2, ry: 3.5, fill: 'none', stroke: '#f2ee1c', 'stroke-width': 1.3 });
});
draw('ellipse', { cx: 439, cy: 196, rx: 2, ry: 3, fill: '#7fd873', stroke: '#e8ee1c', 'stroke-width': 1.2 });
[
  'M226 250l4 2-5 2 5 2-5 2 5 2-5 3',
  'M228 248l8-2 2-1M229 251l8-3',
  'M277 256l8 1-8 2 9 0-10 3 9 0-8 2',
  'M437 203l5 1'
].forEach(function (d) {
  draw('path', { d: d, fill: 'none', stroke: '#0ee62a', 'stroke-width': 1.8 });
});
```
